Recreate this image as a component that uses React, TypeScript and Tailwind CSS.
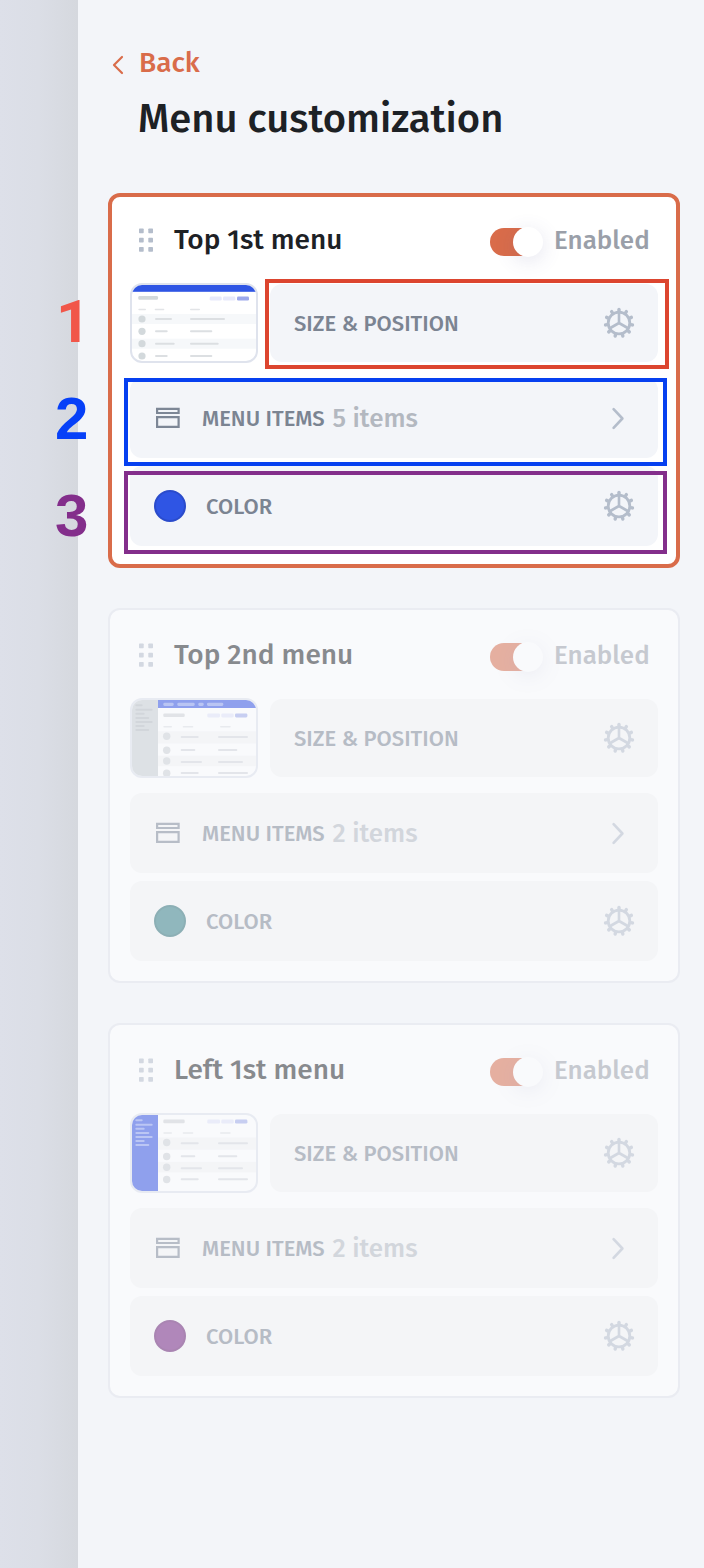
import React from "react";

type PreviewKind = "top" | "topSide" | "left";

interface Menu {
  title: string;
  items: string;
  swatch: string;
  preview: PreviewKind;
  active?: boolean;
}

const menus: Menu[] = [
  { title: "Top 1st menu", items: "5 items", swatch: "bg-[#2f55e4] border-[#2a4bcb]", preview: "top", active: true },
  { title: "Top 2nd menu", items: "2 items", swatch: "bg-[#2f7b82] border-[#286c73]", preview: "topSide" },
  { title: "Left 1st menu", items: "2 items", swatch: "bg-[#701b7c] border-[#62176d]", preview: "left" },
];

function Gear() {
  const teeth = Array.from({ length: 11 }, (_, i) => (i * 360) / 11);
  return (
    <svg className="size-8 shrink-0" viewBox="-16 -16 32 32" fill="none" stroke="#b4bdcb">
      <circle r="10.8" strokeWidth="2.8" />
      <path d="M0 0V-10M0 0L8.7 5M0 0L-8.7 5" strokeWidth="2.6" />
      {teeth.map((a) => (
        <path key={a} d="M0 -11.5V-13.6" strokeWidth="3.4" strokeLinecap="round" transform={`rotate(${a})`} />
      ))}
    </svg>
  );
}

function Handle() {
  return (
    <svg className="h-6 w-4 shrink-0" viewBox="0 0 16 24" fill="#b4bdcb">
      {[0.6, 9.8, 19].map((y) =>
        [1, 10.3].map((x) => <rect key={`${x}-${y}`} x={x} y={y} width="4.7" height="4.7" rx="0.7" />)
      )}
    </svg>
  );
}

function Line({ x1, x2, y, c = "#dcdfe2", w = 2 }: { x1: number; x2: number; y: number; c?: string; w?: number }) {
  return <rect x={x1} y={y - w / 2} width={x2 - x1} height={w} rx={Math.min(w / 2, 1.3)} fill={c} />;
}

function TopPreview() {
  const rows = [
    [36, 42, 95],
    [48.3, 37.7, 82.3],
    [60.7, 44.7, 88.7],
    [73, 37.7, 82.3],
  ];
  return (
    <>
      <rect width="128" height="8.8" fill="#2f55e4" />
      <Line x1={8.3} x2={28} y={14.8} w={3.8} c="#d3d9db" />
      <Line x1={79.7} x2={91.7} y={15.6} w={4} c="#e7e9fb" />
      <Line x1={93} x2={105.4} y={15.6} w={4} c="#e7e9fb" />
      <Line x1={107} x2={119} y={15.6} w={4} c="#9ca8eb" />
      <Line x1={8.3} x2={16} y={26.5} w={1.5} c="#e2e4e7" />
      <Line x1={24.7} x2={34.3} y={26.5} w={1.5} c="#e2e4e7" />
      <Line x1={60} x2={70} y={26.5} w={1.5} c="#e2e4e7" />
      <rect y="31" width="128" height="10" fill="#f6f8fa" />
      <rect y="55.7" width="128" height="10" fill="#f6f8fa" />
      {rows.map(([y, a, b]) => (
        <g key={y}>
          <circle cx="12" cy={y} r="3.6" fill="#d3d9dc" />
          <Line x1={25} x2={a} y={y} />
          <Line x1={60} x2={b} y={y} />
        </g>
      ))}
    </>
  );
}

function SidePreview({ bar }: { bar: boolean }) {
  const rows = [
    [38.3, 39, 68.7, 118],
    [52.3, 52, 65.3, 107.3],
    [63, 64, 72, 113],
    [75.3, 75, 68.7, 118],
  ];
  const side = [
    [7.3, 12.7],
    [11.7, 22.7],
    [15.7, 14.7],
    [20, 19.3],
    [24, 22.7],
    [28, 14.7],
    [32, 19.3],
  ];
  const sideLine = bar ? "#b3b9be" : "#8598f0";
  return (
    <>
      <rect width="28" height="80" fill={bar ? "#c9cfd3" : "#2e4de2"} />
      {side.map(([y, x]) => (
        <Line key={y} x1={5.3} x2={x} y={y} c={sideLine} />
      ))}
      {bar && (
        <g>
          <rect x="28" width="100" height="10" fill="#2e4de2" />
          <Line x1={33.3} x2={43.7} y={6.3} w={3.2} c="#8296ee" />
          <Line x1={47.3} x2={64.7} y={6.3} w={3.2} c="#8296ee" />
          <Line x1={68.3} x2={73.7} y={6.3} w={3.2} c="#8296ee" />
          <Line x1={77} x2={93.3} y={6.3} w={3.2} c="#8296ee" />
        </g>
      )}
      <g transform={bar ? undefined : "translate(0 -8.8)"}>
        <Line x1={33.3} x2={54.7} y={17.2} w={3.6} c="#d0d3d6" />
        <Line x1={77.3} x2={90} y={17.4} w={4} c="#e2e5fa" />
        <Line x1={91.3} x2={103.7} y={17.4} w={4} c="#e2e5fa" />
        <Line x1={105} x2={117.4} y={17.4} w={4} c="#9ca8eb" />
        <Line x1={33.3} x2={42} y={28.7} w={1.5} c="#dfe1e5" />
        <Line x1={52.7} x2={63.3} y={28.7} w={1.5} c="#dfe1e5" />
        <Line x1={90} x2={100.7} y={28.7} w={1.5} c="#dfe1e5" />
        <rect x="28" y="33.3" width="100" height="12.2" fill="#f5f6f7" />
        <rect x="28" y="57.7" width="100" height="10.5" fill="#f5f6f7" />
        {rows.map(([cy, y, a, b]) => (
          <g key={y}>
            <circle cx="36.7" cy={cy} r="3.7" fill="#cfd2d6" />
            <Line x1={50.7} x2={a} y={y} c="#d4d7dc" />
            <Line x1={88} x2={b} y={y} c="#d4d7dc" />
          </g>
        ))}
      </g>
    </>
  );
}

function Preview({ kind }: { kind: PreviewKind }) {
  return (
    <div className="h-20 w-32 shrink-0 overflow-hidden rounded-xl border-2 border-[#dfe3ed] bg-white">
      <svg className="h-[76px] w-[124px]" viewBox="2 2 124 76">
        {kind === "top" ? <TopPreview /> : <SidePreview bar={kind === "topSide"} />}
      </svg>
    </div>
  );
}

function Label({ children }: { children: React.ReactNode }) {
  return <span className="whitespace-nowrap pt-px text-[22px] leading-8 font-medium text-[#7b8492]">{children}</span>;
}

function Card({ menu }: { menu: Menu }) {
  const frame = menu.active
    ? "border-4 border-[#d96c4a] px-[18px] bg-white"
    : "border-2 border-[#e2e4ec] px-5 pt-0.5 bg-white opacity-50";
  const row = menu.active ? "bg-[#f3f5f9]" : "bg-[#f5f5f6]";
  return (
    <section className={`h-[375px] rounded-xl ${frame}`}>
      <header className="flex h-[86px] items-center pl-2">
        <Handle />
        <h2 className="ml-5 flex-1 whitespace-nowrap text-[28px] leading-9 font-medium text-[#1d2125]">
          {menu.title}
        </h2>
        <div className="mt-1 flex h-7 w-[52px] items-center justify-end rounded-full bg-[#d96c4a]">
          <div className="-mr-px size-[30px] shrink-0 rounded-full bg-white shadow-[0_4px_20px_rgba(90,90,150,0.16)]" />
        </div>
        <span className="mr-2 ml-3 w-24 whitespace-nowrap pt-px text-[26px] leading-9 font-medium text-[#9a9fa9]">
          Enabled
        </span>
      </header>
      <div className="flex items-center gap-3">
        <Preview kind={menu.preview} />
        <div className={`flex h-[78px] flex-1 items-center justify-between rounded-xl pr-[23px] pl-6 ${row}`}>
          <Label>SIZE &amp; POSITION</Label>
          <Gear />
        </div>
      </div>
      <div className={`mt-[15px] flex h-20 items-center rounded-xl px-6 ${row}`}>
        <svg className="h-6 w-7 shrink-0" viewBox="0 0 28 24" fill="none" stroke="#7d8796" strokeWidth="2.2">
          <path d="M3.1 2.8H24.6V7H3.1ZM3.1 11.1H24.6V20.9H3.1Z" />
        </svg>
        <div className="ml-5 flex w-[130.5px] items-center">
          <Label>MENU ITEMS</Label>
        </div>
        <span className="flex-1 whitespace-nowrap pt-0.5 text-[26px] leading-9 font-medium text-[#b3b8c0]">{menu.items}</span>
        <svg className="mr-[9px] h-6 w-3.5 shrink-0" viewBox="0 0 14 24" fill="none" stroke="#b4bdcb" strokeWidth="2.6" strokeLinecap="round" strokeLinejoin="round">
          <path d="M2.6 3.2L11.4 12.5L2.6 21.8" />
        </svg>
      </div>
      <div className={`mt-2 flex h-20 items-center rounded-xl pr-[23px] pl-6 ${row}`}>
        <div className={`mr-5 size-8 rounded-full border-2 ${menu.swatch}`} />
        <Label>COLOR</Label>
        <div className="flex-1" />
        <Gear />
      </div>
    </section>
  );
}

export default function App() {
  return (
    <div className="relative flex h-[1568px] w-[704px] overflow-hidden bg-[#f3f5f9] font-['Fira_Sans','Noto_Sans',sans-serif]">
      <aside className="w-[78px] shrink-0 bg-linear-to-r from-[#dde0e9] via-[#dbdee6] to-[#d5d8de]" />
      <main className="flex-1 pt-11 pr-6 pl-[30px]">
        <a className="flex h-9 items-center text-[#d96c4a]">
          <svg className="mt-1.5 h-5 w-4 shrink-0" viewBox="0 0 16 20" fill="none" stroke="currentColor" strokeWidth="2.2" strokeLinecap="round" strokeLinejoin="round">
            <path d="M14 2L6 10L14 18" />
          </svg>
          <span className="ml-[15px] pt-px text-[28px] leading-9 font-medium">Back</span>
        </a>
        <h1 className="mt-[13px] mb-12 ml-[30px] h-[52px] whitespace-nowrap text-[40px] leading-[52px] font-medium text-[#1d2125]">
          Menu customization
        </h1>
        <div className="flex flex-col gap-10">
          {menus.map((m) => (
            <Card key={m.title} menu={m} />
          ))}
        </div>
      </main>

      <div className="absolute top-[279px] left-[265px] h-[90px] w-[404px] border-4 border-[#dc452f]" />
      <div className="absolute top-[378px] left-[124px] h-[88px] w-[543px] border-4 border-[#0640f0]" />
      <div className="absolute top-[471px] left-[124px] h-[83px] w-[543px] border-4 border-[#832e8b]" />
      <div className="absolute top-[292px] left-[56px] font-[Roboto,sans-serif] text-[60px] leading-[60px] font-bold text-[#f15649]">1</div>
      <div className="absolute top-[389px] left-[55px] font-['Liberation_Sans',sans-serif] text-[60px] leading-[60px] font-bold text-[#0640f8]">2</div>
      <div className="absolute top-[486px] left-[55px] font-['Liberation_Sans',sans-serif] text-[60px] leading-[60px] font-bold text-[#832e8b]">3</div>
    </div>
  );
}
